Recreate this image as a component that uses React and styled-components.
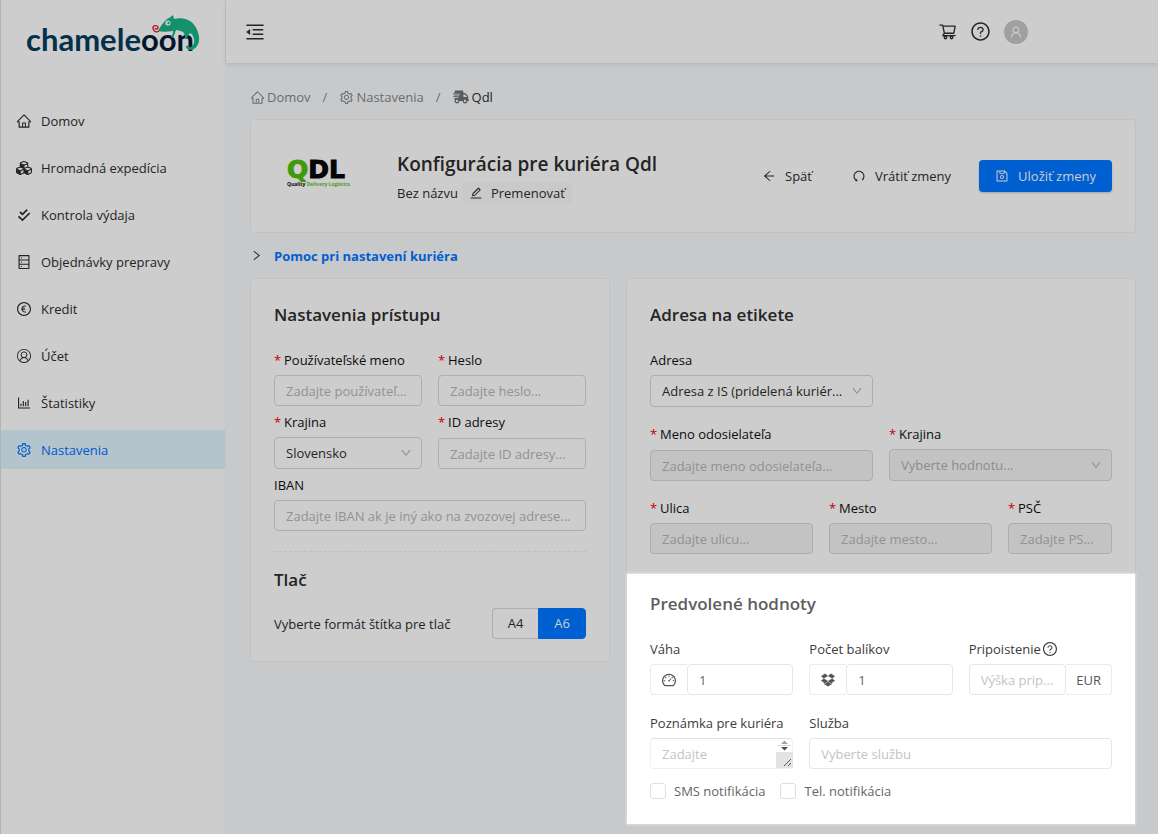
import { useState } from "react";
import {
  AiOutlineArrowLeft,
  AiOutlineBarChart,
  AiOutlineDashboard,
  AiOutlineDatabase,
  AiOutlineDown,
  AiOutlineDropbox,
  AiOutlineEdit,
  AiOutlineEuro,
  AiOutlineHome,
  AiOutlineMenuFold,
  AiOutlineQuestionCircle,
  AiOutlineRight,
  AiOutlineSave,
  AiOutlineSetting,
  AiOutlineShoppingCart,
  AiOutlineUndo,
  AiOutlineUser,
} from "react-icons/ai";
import { FaCubes, FaShippingFast } from "react-icons/fa";
import { VscAccount } from "react-icons/vsc";
import styled, { createGlobalStyle, css } from "styled-components";

function DoubleCheck({ size }) {
  return (
    <svg width={size} height={size} viewBox="0 0 14 14" fill="none" stroke="currentColor" strokeWidth="1.7">
      <path d="M3 4 L5.500 6.300 L10.200 1.600" />
      <path d="M1.500 8.300 L5.500 12 L12.700 5" />
    </svg>
  );
}

const menu = [
  { label: "Domov", icon: AiOutlineHome },
  { label: "Hromadná expedícia", icon: FaCubes },
  { label: "Kontrola výdaja", icon: DoubleCheck, size: 14 },
  { label: "Objednávky prepravy", icon: AiOutlineDatabase },
  { label: "Kredit", icon: AiOutlineEuro },
  { label: "Účet", icon: VscAccount, size: 14 },
  { label: "Štatistiky", icon: AiOutlineBarChart },
  { label: "Nastavenia", icon: AiOutlineSetting, active: true },
];

function BrandLogo() {
  return (
    <svg width="180" height="48" viewBox="0 0 180 48" role="img" aria-label="chameleoon">
      <text x="1" y="39" fontFamily="Lato, sans-serif" fontWeight="700" fontSize="31" fill="#04304a">
        chamele<tspan fill="#04152c">oon</tspan>
      </text>
      <path
        d="M133 19 C137 12 140 8 144 6 L148 3 L149 7 C156 5 166 7 170 14 C174 20 176 29 172 34 C169 39 162 39 161 35 C161 33 163 33 164 35 C167 36 170 32 169 27 C168 23 167 22 165 21 C163 23 162 25 162 27 L160 27 C160 24 160 22 158 20 C156 19 153 18 151 18 C150 21 149 24 148 26 L146 25 C148 22 148 20 148 19 C142 20 137 20 133 19 Z"
        fill="#14906b"
      />
      <circle cx="143" cy="11" r="2.600" fill="#cdcdcd" />
      <circle cx="143.500" cy="11" r="1.200" fill="#14906b" />
      <path
        d="M134 19 C131 21 128 19 128 16 C128 13 132 13 133 15 C133 17 131 18 130 16"
        fill="none"
        stroke="#c2121c"
        strokeWidth="1.400"
      />
    </svg>
  );
}

function CourierLogo() {
  return (
    <svg width="72" height="40" viewBox="0 0 72 40" role="img" aria-label="QDL">
      <text
        x="0"
        y="25"
        fontFamily="DejaVu Sans, sans-serif"
        fontWeight="700"
        fontSize="25"
        fill="#050505"
        stroke="#050505"
      >
        <tspan fill="#3f9a0b" stroke="#3f9a0b">
          Q
        </tspan>
        DL
      </text>
      <text x="0" y="33" fontFamily="Open Sans, sans-serif" fontWeight="700" fontSize="5" fill="#050505">
        Quality <tspan fill="#4f9a1c">Delivery Logistics</tspan>
      </text>
    </svg>
  );
}

function Field({ id, label, required, light, span, hint, children }) {
  return (
    <FieldBox $span={span}>
      <FieldLabel htmlFor={id} $light={light}>
        {required && <Star>*</Star>}
        {label}
        {hint && <AiOutlineQuestionCircle size={16} />}
      </FieldLabel>
      {children}
    </FieldBox>
  );
}

function SelectField({ id, options, disabled }) {
  return (
    <SelectWrap>
      <Select id={id} disabled={disabled}>
        {options.map((option) => (
          <option key={option}>{option}</option>
        ))}
      </Select>
      <AiOutlineDown size={12} />
    </SelectWrap>
  );
}

function App() {
  const [format, setFormat] = useState("A6");

  return (
    <>
      <GlobalStyle />
      <Page>
        <Sidebar>
          <Brand href="#">
            <BrandLogo />
          </Brand>
          <Menu>
            {menu.map(({ label, icon: Icon, size = 16, active }) => (
              <MenuLink href="#" key={label} $active={active}>
                <MenuIcon>
                  <Icon size={size} />
                </MenuIcon>
                {label}
              </MenuLink>
            ))}
          </Menu>
        </Sidebar>

        <Content>
          <TopBar>
            <IconButton aria-label="Menu">
              <AiOutlineMenuFold size={22} />
            </IconButton>
            <TopActions>
              <IconButton aria-label="Košík">
                <AiOutlineShoppingCart size={19} />
              </IconButton>
              <IconButton aria-label="Pomoc">
                <AiOutlineQuestionCircle size={21} />
              </IconButton>
              <Avatar aria-label="Používateľ">
                <AiOutlineUser size={14} />
              </Avatar>
            </TopActions>
          </TopBar>

          <Main>
            <Breadcrumb>
              <a href="#">
                <AiOutlineHome size={15} />
                Domov
              </a>
              <span>/</span>
              <a href="#">
                <AiOutlineSetting size={15} />
                Nastavenia
              </a>
              <span>/</span>
              <Current>
                <FaShippingFast size={16} />
                Qdl
              </Current>
            </Breadcrumb>

            <Heading>
              <LogoCell>
                <CourierLogo />
              </LogoCell>
              <HeadingText>
                <h1>Konfigurácia pre kuriéra Qdl</h1>
                <Subtitle>
                  Bez názvu
                  <RenameButton>
                    <AiOutlineEdit size={14} />
                    Premenovať
                  </RenameButton>
                </Subtitle>
              </HeadingText>
              <Actions>
                <Button>
                  <AiOutlineArrowLeft size={14} />
                  Späť
                </Button>
                <Button>
                  <AiOutlineUndo size={14} />
                  Vrátiť zmeny
                </Button>
                <Button $primary>
                  <AiOutlineSave size={14} />
                  Uložiť zmeny
                </Button>
              </Actions>
            </Heading>

            <Help>
              <AiOutlineRight size={13} />
              Pomoc pri nastavení kuriéra
            </Help>

            <Columns>
              <Card>
                <CardTitle>Nastavenia prístupu</CardTitle>
                <AccessGrid>
                  <Field id="user" label="Používateľské meno" required>
                    <Input id="user" placeholder="Zadajte používateľ..." />
                  </Field>
                  <Field id="pass" label="Heslo" required>
                    <Input id="pass" type="password" placeholder="Zadajte heslo..." />
                  </Field>
                  <Field id="country" label="Krajina" required>
                    <SelectField id="country" options={["Slovensko"]} />
                  </Field>
                  <Field id="addressId" label="ID adresy" required>
                    <Input id="addressId" placeholder="Zadajte ID adresy..." />
                  </Field>
                  <Field id="iban" label="IBAN" span={2}>
                    <Input id="iban" placeholder="Zadajte IBAN ak je iný ako na zvozovej adrese..." />
                  </Field>
                </AccessGrid>
                <Divider />
                <PrintTitle>Tlač</PrintTitle>
                <PrintRow>
                  <span>Vyberte formát štítka pre tlač</span>
                  <RadioGroup>
                    {["A4", "A6"].map((value) => (
                      <RadioButton key={value} $checked={format === value}>
                        <input
                          type="radio"
                          name="format"
                          checked={format === value}
                          onChange={() => setFormat(value)}
                        />
                        {value}
                      </RadioButton>
                    ))}
                  </RadioGroup>
                </PrintRow>
              </Card>

              <AddressCard>
                <AddressSection>
                  <CardTitle>Adresa na etikete</CardTitle>
                  <Rows>
                    <TwoCols>
                      <Field id="address" label="Adresa">
                        <SelectField id="address" options={["Adresa z IS (pridelená kuriér..."]} />
                      </Field>
                    </TwoCols>
                    <TwoCols>
                      <Field id="sender" label="Meno odosielateľa" required>
                        <Input id="sender" placeholder="Zadajte meno odosielateľa..." disabled />
                      </Field>
                      <Field id="senderCountry" label="Krajina" required>
                        <SelectField id="senderCountry" options={["Vyberte hodnotu..."]} disabled />
                      </Field>
                    </TwoCols>
                    <StreetCols>
                      <Field id="street" label="Ulica" required>
                        <Input id="street" placeholder="Zadajte ulicu..." disabled />
                      </Field>
                      <Field id="city" label="Mesto" required>
                        <Input id="city" placeholder="Zadajte mesto..." disabled />
                      </Field>
                      <Field id="zip" label="PSČ" required>
                        <Input id="zip" placeholder="Zadajte PS..." disabled />
                      </Field>
                    </StreetCols>
                  </Rows>
                </AddressSection>

                <Defaults>
                  <DefaultsTitle>Predvolené hodnoty</DefaultsTitle>
                  <DefaultsGrid>
                    <Field id="weight" label="Váha" light>
                      <InputGroup>
                        <Addon>
                          <AiOutlineDashboard size={16} />
                        </Addon>
                        <Input id="weight" defaultValue="1" $light />
                      </InputGroup>
                    </Field>
                    <Field id="packages" label="Počet balíkov" light>
                      <InputGroup>
                        <Addon>
                          <AiOutlineDropbox size={16} />
                        </Addon>
                        <Input id="packages" defaultValue="1" $light />
                      </InputGroup>
                    </Field>
                    <Field id="insurance" label="Pripoistenie" light hint>
                      <InputGroup>
                        <Input id="insurance" placeholder="Výška prip..." $light />
                        <Addon $after>EUR</Addon>
                      </InputGroup>
                    </Field>
                    <Field id="note" label="Poznámka pre kuriéra" light>
                      <NoteWrap>
                        <Note id="note" rows={1} placeholder="Zadajte" />
                        <NoteScroll viewBox="0 0 17 30">
                          <path d="M5 6 L8.500 2.500 L12 6 Z" fill="#a3a3a3" />
                          <path d="M2 7.500 H15" stroke="#d5d5d5" />
                          <path d="M5 9 L8.500 12.500 L12 9 Z" fill="#4d4d4d" />
                          <path d="M0 14 H17 V30 H0 Z" fill="#e3e3e3" />
                          <path d="M8 28 L15 21 M12 28 L15 25" stroke="#555" />
                        </NoteScroll>
                      </NoteWrap>
                    </Field>
                    <Field id="service" label="Služba" light span={2}>
                      <Input id="service" placeholder="Vyberte službu" $light />
                    </Field>
                  </DefaultsGrid>
                  <Checks>
                    <label>
                      <Checkbox type="checkbox" />
                      SMS notifikácia
                    </label>
                    <label>
                      <Checkbox type="checkbox" />
                      Tel. notifikácia
                    </label>
                  </Checks>
                </Defaults>
              </AddressCard>
            </Columns>
          </Main>
        </Content>
      </Page>
    </>
  );
}

export default App;

const GlobalStyle = createGlobalStyle`
  * {
    box-sizing: border-box;
  }
  body {
    margin: 0;
    background: #c7c9cb;
  }
  body, button, input, select, textarea {
    font-family: "Open Sans", "Noto Sans", sans-serif;
    font-size: 13px;
    line-height: 22px;
    color: #242424;
  }
  a {
    color: inherit;
    text-decoration: none;
  }
  h1, h2 {
    margin: 0;
    font-weight: 600;
  }
  svg {
    flex-shrink: 0;
  }
`;

const Page = styled.div`
  display: flex;
  min-height: 100vh;
  border-left: 1px solid #b4b4b4;
  border-bottom: 1px solid #b4b4b4;
`;

const Sidebar = styled.aside`
  width: 225px;
  flex-shrink: 0;
  background: #cdcdcd;
  border-right: 1px solid #c2c4c6;
`;

const Brand = styled.a`
  display: block;
  height: 101px;
  padding: 12px 24px;
`;

const Menu = styled.nav`
  display: flex;
  flex-direction: column;
  gap: 8px;
`;

const MenuLink = styled.a`
  display: flex;
  align-items: center;
  gap: 9px;
  height: 39px;
  padding-left: 15px;
  color: ${({ $active }) => ($active ? "#0059cf" : "#242424")};
  background: ${({ $active }) => ($active ? "#b3c4cd" : "transparent")};
`;

const MenuIcon = styled.span`
  display: flex;
  justify-content: center;
  width: 16px;
`;

const Content = styled.div`
  flex: 1;
  min-width: 0;
`;

const TopBar = styled.header`
  display: flex;
  align-items: center;
  justify-content: space-between;
  height: 63px;
  padding: 0 130px 0 18px;
  background: #cdcdcd;
  box-shadow: 0 1px 4px rgba(0, 21, 41, 0.12);
`;

const TopActions = styled.div`
  display: flex;
  align-items: center;
  gap: 13px;
`;

const IconButton = styled.button`
  display: flex;
  padding: 0;
  border: 0;
  background: none;
  cursor: pointer;
`;

const Avatar = styled.button`
  display: flex;
  align-items: center;
  justify-content: center;
  width: 24px;
  height: 24px;
  padding: 0;
  border: 0;
  border-radius: 50%;
  color: #cdcdcd;
  background: #a0a0a0;
`;

const Main = styled.main`
  padding: 23px 22px 9px 24px;
`;

const Breadcrumb = styled.nav`
  display: flex;
  gap: 12px;
  margin-bottom: 11px;
  color: #6b6c6e;
  a {
    display: flex;
    align-items: center;
    gap: 2px;
  }
`;

const Current = styled.span`
  display: flex;
  align-items: center;
  gap: 3px;
  color: #242424;
  svg {
    color: #58595a;
  }
`;

const cardBox = css`
  background: #cdcdcd;
  border: 1px solid #c0c3c6;
  border-radius: 4px;
`;

const Heading = styled.section`
  ${cardBox}
  display: flex;
  align-items: center;
  height: 114px;
  padding: 0 23px;
`;

const LogoCell = styled.div`
  display: flex;
  width: 123px;
  padding: 0 13px 6px;
`;

const HeadingText = styled.div`
  flex: 1;
  padding-top: 2px;
  h1 {
    font-size: 19px;
    line-height: 28px;
  }
`;

const Subtitle = styled.div`
  display: flex;
  align-items: center;
  gap: 4px;
  margin-top: 4px;
`;

const RenameButton = styled.button`
  display: flex;
  align-items: center;
  gap: 8px;
  padding: 0 7px;
  border: 0;
  border-radius: 4px;
  background: #c9c9ca;
`;

const Actions = styled.div`
  display: flex;
  gap: 8px;
`;

const Button = styled.button`
  display: flex;
  align-items: center;
  gap: 9px;
  height: 32px;
  padding: 0 16px;
  border: 0;
  border-radius: 4px;
  background: none;
  ${({ $primary }) =>
    $primary &&
    css`
      margin-left: 4px;
      color: #cdcdcd;
      background: #005fd1;
      box-shadow: 0 1px 2px rgba(0, 0, 0, 0.2);
    `}
`;

const Help = styled.button`
  display: flex;
  align-items: center;
  gap: 11px;
  height: 45px;
  padding: 0;
  border: 0;
  background: none;
  font-weight: 700;
  color: #005fd1;
  svg {
    color: #242424;
  }
`;

const Columns = styled.div`
  display: grid;
  grid-template-columns: 12fr 17fr;
  gap: 16px;
  align-items: start;
`;

const Card = styled.section`
  ${cardBox}
  min-width: 0;
  padding: 22px 23px;
`;

const CardTitle = styled.h2`
  margin-bottom: 20px;
  font-size: 17px;
  line-height: 28px;
`;

const AccessGrid = styled.div`
  display: grid;
  grid-template-columns: 1fr 1fr;
  gap: 5px 16px;
`;

const FieldBox = styled.div`
  display: flex;
  flex-direction: column;
  justify-content: space-between;
  gap: 4px;
  min-width: 0;
  grid-column: ${({ $span }) => ($span ? `span ${$span}` : "auto")};
`;

const FieldLabel = styled.label`
  display: flex;
  align-items: center;
  gap: 1px;
  color: ${({ $light }) => ($light ? "#3c3c3c" : "#0c0c0c")};
`;

const Star = styled.span`
  width: 9px;
  color: #c00000;
`;

const control = css`
  width: 100%;
  min-width: 0;
  height: 31px;
  padding: 0 11px;
  border: 1px solid ${({ $light }) => ($light ? "#e6e6e6" : "#adadad")};
  border-radius: 4px;
  outline: 0;
  color: ${({ $light }) => ($light ? "#666666" : "#242424")};
  background: ${({ $light }) => ($light ? "#ffffff" : "#cdcdcd")};
  &::placeholder {
    color: ${({ $light }) => ($light ? "#c4c4c4" : "#929292")};
    opacity: 1;
  }
  &:disabled {
    color: #8c8c8c;
    background: #c3c3c3;
    opacity: 1;
  }
`;

const Input = styled.input`
  ${control}
`;

const Select = styled.select`
  ${control}
  height: 32px;
  appearance: none;
`;

const SelectWrap = styled.div`
  position: relative;
  display: flex;
  svg {
    position: absolute;
    right: 10px;
    top: 10px;
    color: #8a8a8a;
    pointer-events: none;
  }
`;

const Divider = styled.hr`
  margin: 20px 0 14px;
  border: 0;
  border-top: 1px dashed #bebebe;
`;

const PrintTitle = styled.h2`
  margin-bottom: 14px;
  font-size: 17px;
  line-height: 28px;
`;

const PrintRow = styled.div`
  display: flex;
  align-items: center;
  justify-content: space-between;
`;

const RadioGroup = styled.div`
  display: flex;
`;

const RadioButton = styled.label`
  height: 31px;
  padding: 0 15px;
  border: 1px solid ${({ $checked }) => ($checked ? "#005fd1" : "#adadad")};
  line-height: 29px;
  color: ${({ $checked }) => ($checked ? "#cdcdcd" : "#242424")};
  background: ${({ $checked }) => ($checked ? "#005fd1" : "#cdcdcd")};
  cursor: pointer;
  &:first-child {
    border-radius: 4px 0 0 4px;
    border-right: 0;
  }
  &:last-child {
    border-radius: 0 4px 4px 0;
  }
  input {
    position: absolute;
    opacity: 0;
    margin: 0;
  }
`;

const AddressCard = styled.section`
  ${cardBox}
  min-width: 0;
`;

const AddressSection = styled.div`
  padding: 22px 23px 20px;
`;

const Rows = styled.div`
  display: flex;
  flex-direction: column;
  gap: 16px;
`;

const TwoCols = styled.div`
  display: grid;
  grid-template-columns: 1fr 1fr;
  gap: 16px;
`;

const StreetCols = styled.div`
  display: grid;
  grid-template-columns: 163fr 163fr 104fr;
  gap: 16px;
`;

const Defaults = styled.div`
  padding: 16px 23px 22px;
  background: #ffffff;
  box-shadow: 0 0 2px 1px rgba(255, 255, 255, 0.5);
`;

const DefaultsTitle = styled(CardTitle)`
  color: #5e5e5e;
`;

const DefaultsGrid = styled.div`
  display: grid;
  grid-template-columns: repeat(3, 1fr);
  gap: 17px 16px;
`;

const InputGroup = styled.div`
  display: flex;
`;

const Addon = styled.span`
  display: flex;
  flex-shrink: 0;
  align-items: center;
  justify-content: center;
  min-width: 36px;
  padding: 0 10px;
  border: 1px solid #ebebeb;
  border-radius: ${({ $after }) => ($after ? "0 4px 4px 0" : "4px 0 0 4px")};
  border-left-width: ${({ $after }) => ($after ? "0" : "1px")};
  border-right-width: ${({ $after }) => ($after ? "1px" : "0")};
  color: #555555;
`;

const NoteWrap = styled.div`
  position: relative;
  display: flex;
`;

const Note = styled.textarea`
  width: 100%;
  height: 31px;
  padding: 4px 11px;
  border: 1px solid #f1f1f1;
  border-top-color: #e0e0e0;
  border-radius: 4px;
  outline: 0;
  resize: none;
  overflow: hidden;
  &::placeholder {
    color: #c4c4c4;
  }
`;

const NoteScroll = styled.svg`
  position: absolute;
  right: 0;
  top: 0;
  width: 17px;
  height: 30px;
`;

const Checks = styled.div`
  display: flex;
  gap: 15px;
  margin-top: 11px;
  color: #666666;
  label {
    display: flex;
    align-items: center;
    gap: 8px;
  }
`;

const Checkbox = styled.input`
  appearance: none;
  width: 16px;
  height: 16px;
  margin: 0;
  border: 1px solid #dedede;
  border-radius: 3px;
  background: #ffffff;
`;
